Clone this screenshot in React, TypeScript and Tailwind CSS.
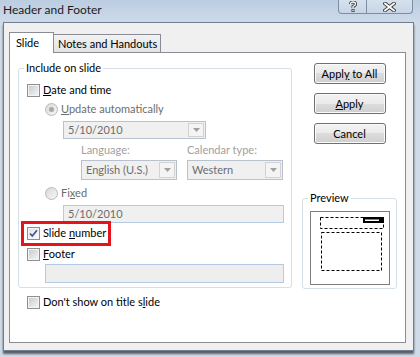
import React from 'react';

const CheckBox = ({ checked = false }: { checked?: boolean }) => (
  <span className="relative flex h-[13px] w-[13px] shrink-0 items-center justify-center border border-[#8f8f8f] bg-[#f4f4f4]">
    <span
      className={
        checked
          ? 'h-[9px] w-[9px] bg-gradient-to-br from-[#e2e4e8] to-[#fbfbfb]'
          : 'h-[9px] w-[9px] bg-gradient-to-br from-[#c9ccd1] to-[#f3f4f5]'
      }
    />
    {checked && (
      <svg className="absolute left-0 top-0" width="11" height="11" viewBox="0 0 11 11">
        <path d="M2 5.5 L4.3 8 L9 2.2" fill="none" stroke="#3d5596" strokeWidth="1.7" />
      </svg>
    )}
  </span>
);

const Radio = ({ selected = false }: { selected?: boolean }) => (
  <span className="flex h-[13px] w-[13px] shrink-0 items-center justify-center rounded-full border border-[#b9b9b9] bg-gradient-to-br from-[#d9d9d9] to-[#f7f7f7]">
    {selected && <span className="h-[5px] w-[5px] rounded-full bg-[#a9a9a9]" />}
  </span>
);

const Arrow = () => (
  <svg width="7" height="4" viewBox="0 0 7 4">
    <path d="M0 0 H7 L3.5 4 Z" fill="#a0a0a0" />
  </svg>
);

const Combo = ({ value, className }: { value: string; className: string }) => (
  <div className={`flex border border-[#b7c2ce] bg-[#f0f0f0] ${className}`}>
    <span className="flex flex-1 items-center pl-[4px] text-[#6d6d6d]">{value}</span>
    <span className="my-px mr-px flex w-[16px] items-center justify-center border border-[#d2d2d2] bg-[#f4f4f4]">
      <Arrow />
    </span>
  </div>
);

const WinButton = ({ children }: { children: React.ReactNode }) => (
  <button className="h-[21px] w-[72px] rounded-[3px] border border-[#707070] bg-[linear-gradient(#f2f2f2_0%,#ebebeb_50%,#dddddd_50%,#cfcfcf_100%)] text-[11px] leading-none text-black shadow-[inset_0_0_0_1px_#fbfbfb]">
    {children}
  </button>
);

const App = () => {
  return (
    <div className="flex h-[357px] w-[420px] flex-col overflow-hidden bg-[#cfdbe9] font-['Lato',sans-serif] text-[11px] leading-[16px] text-black">
      {/* Title bar */}
      <div className="flex h-[22px] shrink-0 items-start justify-between bg-gradient-to-b from-[#bccde1] to-[#cddaea]">
        <span className="pl-[3px] pt-[2px] text-[12px] text-[#1b1b1b]">Header and Footer</span>
        <div className="mr-[7px] flex h-[14px] rounded-b-[4px] border border-t-0 border-[#7d8ea3] bg-gradient-to-b from-[#d6e1ee] to-[#c7d5e6]">
          <span className="flex w-[28px] items-center justify-center border-r border-[#7d8ea3]">
            <svg width="8" height="11" viewBox="0 0 8 11">
              <path d="M1.5 3 Q1.5 1 4 1 Q6.5 1 6.5 3 Q6.5 4.5 4 5.5 V7" fill="none" stroke="#3a3a3a" strokeWidth="3" />
              <path d="M1.5 3 Q1.5 1 4 1 Q6.5 1 6.5 3 Q6.5 4.5 4 5.5 V7" fill="none" stroke="#ffffff" strokeWidth="1.3" />
              <rect x="2.5" y="8" width="3" height="3" fill="#3a3a3a" />
              <rect x="3.3" y="8.8" width="1.4" height="1.4" fill="#ffffff" />
            </svg>
          </span>
          <span className="flex w-[45px] items-center justify-center">
            <svg width="13" height="10" viewBox="0 0 13 10">
              <path d="M2 1.5 L11 8.5 M11 1.5 L2 8.5" stroke="#3a3a3a" strokeWidth="3.6" strokeLinecap="square" />
              <path d="M2 1.5 L11 8.5 M11 1.5 L2 8.5" stroke="#ffffff" strokeWidth="1.8" strokeLinecap="square" />
            </svg>
          </span>
        </div>
      </div>

      {/* Client area */}
      <div className="ml-[3px] mr-[6px] flex h-[329px] flex-col border border-[#6f7d8c] bg-[#f0f0f0] shadow-[0_3px_2px_#5a5f66]">
        {/* Tabs */}
        <div className="ml-[5px] mt-[9px] flex items-end">
          <div className="relative z-10 -mb-px h-[21px] w-[45px] border border-b-0 border-[#898c95] bg-white pl-[6px] pt-[2px]">
            Slide
          </div>
          <div className="h-[18px] w-[107px] border border-b-0 border-l-0 border-[#898c95] bg-gradient-to-b from-[#f2f2f2] to-[#e3e3e3] pl-[4px] pt-px">
            Notes and Handouts
          </div>
        </div>

        {/* Tab panel */}
        <div className="mb-[7px] ml-[5px] mr-[7px] flex flex-1 border border-[#898c95] bg-white pl-[8px] pt-[7px]">
          {/* Left column */}
          <div className="flex w-[274px] flex-col">
            <fieldset className="rounded-[3px] border border-[#d5dfe5] pb-[4px] pl-[8px]">
              <legend className="-ml-[3px] px-[2px] leading-[16px]">Include on slide</legend>

              <div className="mt-[6px] flex h-[16px] items-center gap-[3px]">
                <CheckBox />
                <span>
                  <u>D</u>ate and time
                </span>
              </div>

              <div className="ml-[18px] mt-[3px] flex h-[16px] items-center gap-[3px] text-[#6d6d6d]">
                <Radio selected />
                <span>
                  <u>U</u>pdate automatically
                </span>
              </div>

              <Combo value="5/10/2010" className="ml-[36px] mt-[4px] h-[18px] w-[143px]" />

              <div className="ml-[54px] mt-[3px] flex text-[#a0a0a0]">
                <div className="w-[106px]">
                  <div className="h-[16px]">Language:</div>
                  <Combo value="English (U.S.)" className="mt-[2px] h-[20px] w-[96px] text-[#6d6d6d]" />
                </div>
                <div>
                  <div className="h-[16px]">Calendar type:</div>
                  <Combo value="Western" className="mt-[2px] h-[20px] w-[96px] text-[#6d6d6d]" />
                </div>
              </div>

              <div className="ml-[18px] mt-[5px] flex h-[16px] items-center gap-[3px] text-[#6d6d6d]">
                <Radio />
                <span>
                  Fi<u>x</u>ed
                </span>
              </div>

              <div className="ml-[36px] mt-[4px] flex h-[18px] w-[221px] items-center border border-[#b4cbe3] bg-[#f0f0f0] pl-[4px] text-[#6d6d6d]">
                5/10/2010
              </div>

              <div className="relative mt-[2px] flex h-[16px] items-center gap-[3px]">
                <CheckBox checked />
                <span>
                  Slide <u>n</u>umber
                </span>
                <span className="absolute -left-[6px] -top-[4px] h-[25px] w-[90px] border-[3px] border-[#e5141c]" />
              </div>

              <div className="mt-[5px] flex h-[16px] items-center gap-[3px]">
                <CheckBox />
                <span>
                  <u>F</u>ooter
                </span>
              </div>

              <div className="ml-[18px] mt-[2px] h-[19px] w-[239px] border border-[#b4cbe3] bg-[#eeeeee]" />
            </fieldset>

            <div className="ml-[9px] mt-[6px] flex h-[16px] items-center gap-[3px]">
              <CheckBox />
              <span>
                Don't show on title s<u>l</u>ide
              </span>
            </div>
          </div>

          {/* Right column */}
          <div className="ml-[10px] flex w-[95px] flex-col">
            <div className="mt-[3px] flex flex-col items-center gap-[9px]">
              <WinButton>
                Appl<u>y</u> to All
              </WinButton>
              <WinButton>
                <u>A</u>pply
              </WinButton>
              <WinButton>Cancel</WinButton>
            </div>

            <fieldset className="mt-[46px] rounded-[3px] border border-[#d5dfe5] pb-[3px] pl-[7px]">
              <legend className="-ml-[2px] px-[2px] leading-[16px]">Preview</legend>
              <svg className="mt-[5px]" width="80" height="74" viewBox="0 0 80 74">
                <rect x="0.5" y="0.5" width="79" height="73" fill="#ffffff" stroke="#808080" />
                <rect x="10.5" y="6.5" width="63" height="11" fill="none" stroke="#000" strokeDasharray="3 2" />
                <rect x="11.5" y="21.5" width="60" height="38" fill="none" stroke="#000" strokeDasharray="3 2" />
                <rect x="53" y="6" width="21" height="6" fill="#000" />
                <rect x="55" y="8.5" width="14" height="1.5" fill="#fff" />
              </svg>
            </fieldset>
          </div>
        </div>
      </div>
    </div>
  );
};

export default App;
